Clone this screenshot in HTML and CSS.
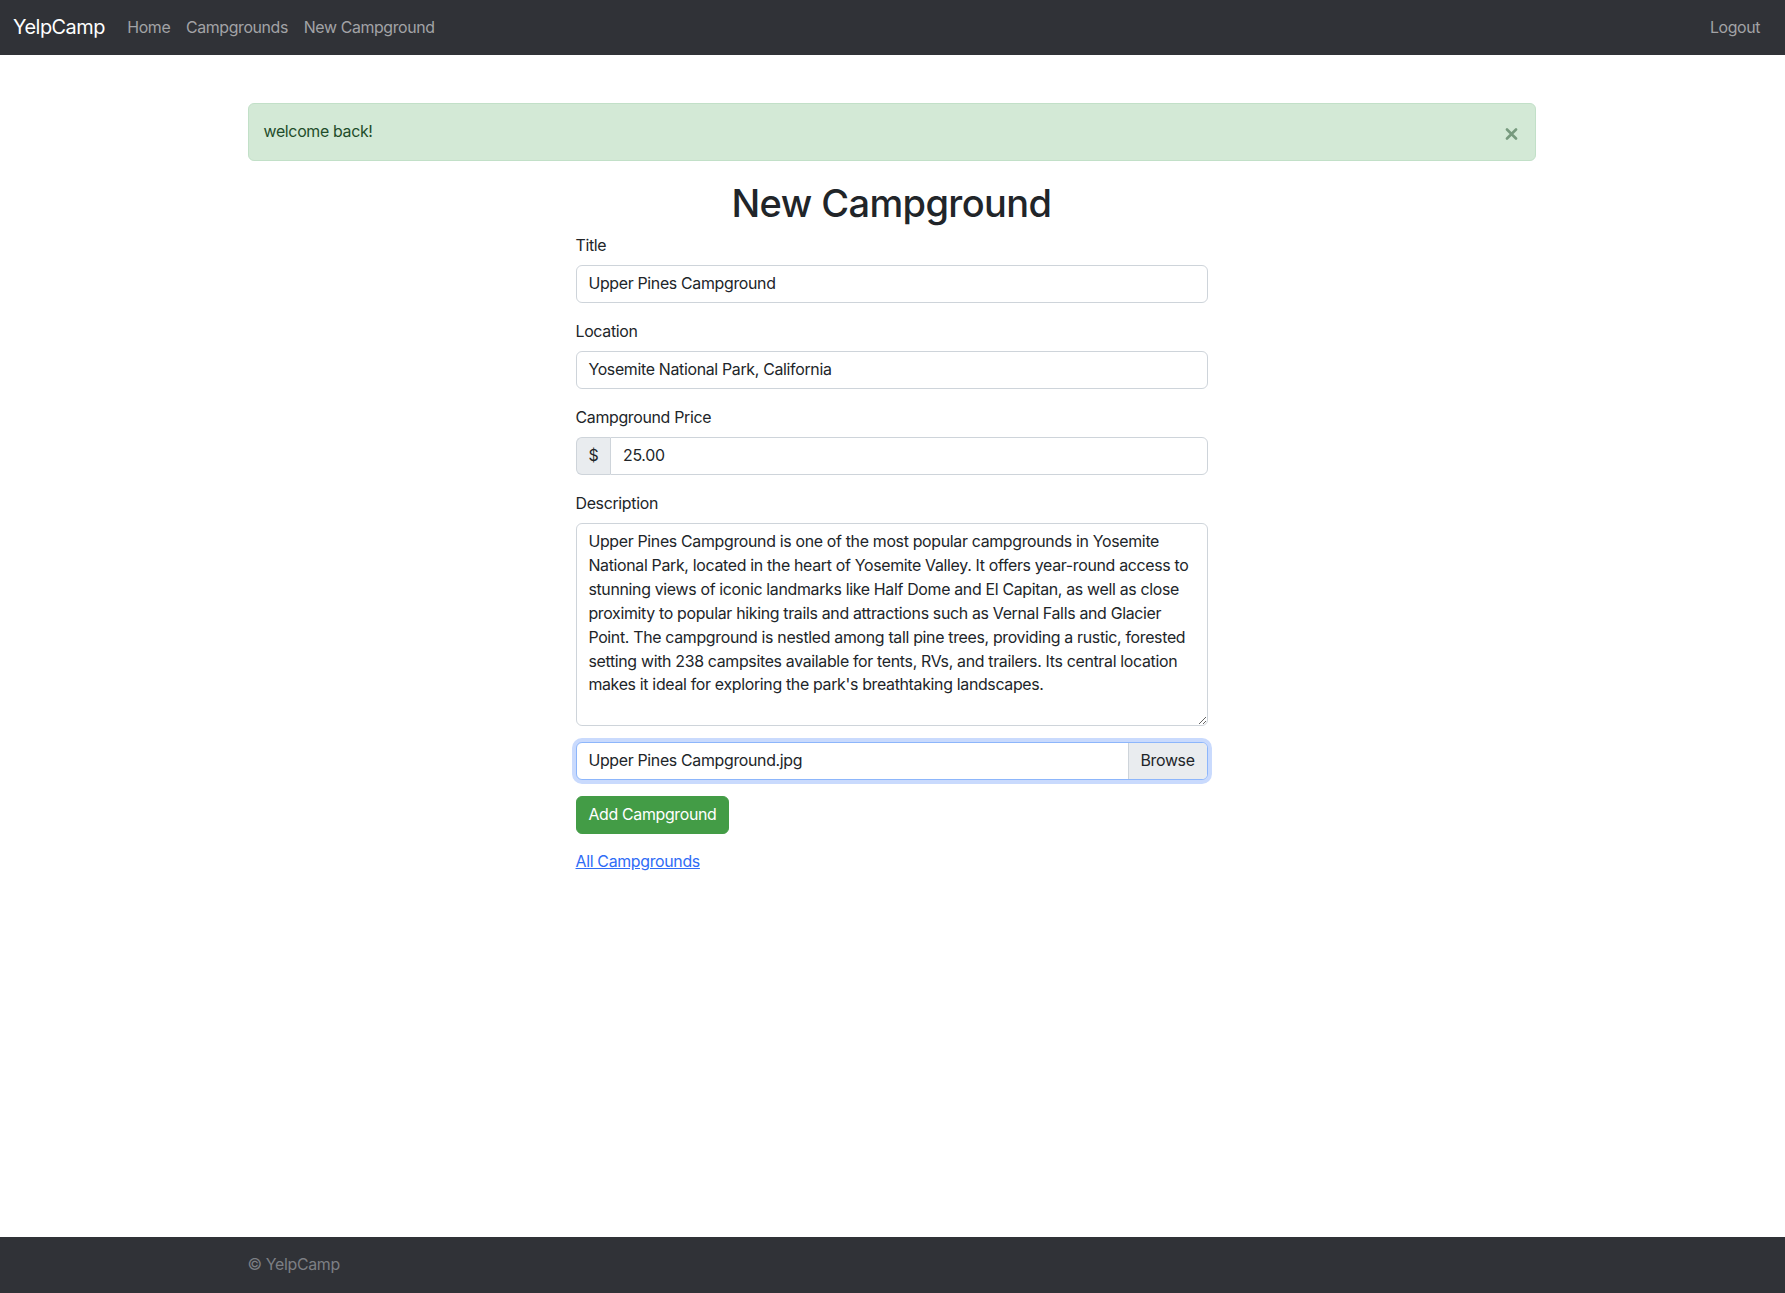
FILE: index.html
```html
<!DOCTYPE html>
<html lang="en">
<head>
<meta charset="utf-8">
<title>New Campground</title>
<link rel="stylesheet" href="styles.css">
</head>
<body>
<div class="page">
  <nav class="navbar">
    <a class="brand" href="#">YelpCamp</a>
    <div class="nav-links">
      <a class="nav-link" href="#">Home</a>
      <a class="nav-link" href="#">Campgrounds</a>
      <a class="nav-link" href="#">New Campground</a>
    </div>
    <div class="nav-right">
      <a class="nav-link" href="#">Logout</a>
    </div>
  </nav>

  <main class="container">
    <div class="alert">
      <span>welcome back!</span>
      <button class="close" type="button" aria-label="Close">
        <svg width="13" height="12" viewBox="0 0 13 12"><path d="M2 1.5 L11 10.5 M11 1.5 L2 10.5" stroke="currentColor" stroke-width="2.6" stroke-linecap="round"/></svg>
      </button>
    </div>

    <div class="form-col">
      <h1 class="title">New Campground</h1>
      <form class="form">
        <div class="group">
          <label class="label">Title</label>
          <input class="control" type="text" value="Upper Pines Campground">
        </div>
        <div class="group">
          <label class="label">Location</label>
          <input class="control" type="text" value="Yosemite National Park, California">
        </div>
        <div class="group">
          <label class="label">Campground Price</label>
          <div class="input-group">
            <span class="addon">$</span>
            <input class="control joined" type="text" value="25.00">
          </div>
        </div>
        <div class="group">
          <label class="label">Description</label>
          <textarea class="control area">Upper Pines Campground is one of the most popular campgrounds in Yosemite National Park, located in the heart of Yosemite Valley. It offers year-round access to stunning views of iconic landmarks like Half Dome and El Capitan, as well as close proximity to popular hiking trails and attractions such as Vernal Falls and Glacier Point. The campground is nestled among tall pine trees, providing a rustic, forested setting with 238 campsites available for tents, RVs, and trailers. Its central location makes it ideal for exploring the park's breathtaking landscapes.</textarea>
        </div>
        <div class="group file-group">
          <div class="file focused">
            <span class="file-name">Upper Pines Campground.jpg</span>
            <span class="file-btn">Browse</span>
          </div>
        </div>
        <div class="group">
          <button class="btn-success" type="button">Add Campground</button>
        </div>
        <a class="back-link" href="#">All Campgrounds</a>
      </form>
    </div>
  </main>

  <footer class="footer">
    <div class="footer-inner">
      <span class="muted">© YelpCamp</span>
    </div>
  </footer>
</div>
</body>
</html>
```

FILE: styles.css
```css
* { box-sizing: border-box; }

html, body {
  margin: 0;
  padding: 0;
}

body {
  font-family: Inter, "Noto Sans", "Liberation Sans", sans-serif;
  font-size: 15.9px;
  line-height: 23.85px;
  letter-spacing: -0.32px;
  color: #212529;
  background: #ffffff;
}

.page {
  min-height: 100vh;
  display: flex;
  flex-direction: column;
}

/* navbar */
.navbar {
  background: #303237;
  display: flex;
  align-items: center;
  height: 55px;
  padding: 0 17px 0 13px;
}

.brand {
  color: #ffffff;
  text-decoration: none;
  font-size: 19.9px;
  line-height: 29.8px;
  margin-right: 14.5px;
  letter-spacing: -0.5px;
}

.nav-links {
  display: flex;
}

.nav-right {
  margin-left: auto;
  display: flex;
}

.nav-link {
  color: #a2a3a6;
  text-decoration: none;
  padding: 7.9px 7.9px;
  line-height: 23.85px;
  letter-spacing: -0.38px;
}

/* main */
.container {
  width: 1288px;
  margin: 48.3px auto 0 calc(50% - 645px);
}

.alert {
  display: flex;
  align-items: center;
  justify-content: space-between;
  background: #d3e9d6;
  border: 1px solid #c2e0c8;
  color: #1f4d2b;
  border-radius: 5.96px;
  padding: 15.9px 15.9px 15.9px 15px;
  margin-bottom: 15.9px;
}

.close {
  border: 0;
  background: transparent;
  padding: 0;
  margin: 4px 1px 0 0;
  color: #779a7e;
  display: flex;
  cursor: pointer;
}

.form-col {
  width: 632px;
  margin: 0 auto;
}

.title {
  font-size: 38px;
  line-height: 52px;
  font-weight: 500;
  text-align: center;
  margin: 0 0 4.7px;
  color: #212529;
  letter-spacing: -0.6px;
}

.group {
  margin-bottom: 16.5px;
}

.file-group {
  margin-bottom: 16px;
}

.label {
  display: block;
  margin-bottom: 7.94px;
}

.control {
  display: block;
  width: 100%;
  padding: 5.96px 11.9px;
  font-family: inherit;
  font-size: 15.9px;
  line-height: 23.85px;
  letter-spacing: inherit;
  color: #212529;
  background: #ffffff;
  border: 1px solid #ced4da;
  border-radius: 5.96px;
  outline: none;
}

.area {
  height: 202.2px;
  resize: vertical;
}

.input-group {
  display: flex;
}

.addon {
  padding: 5.96px 11.9px;
  background: #e9ecef;
  border: 1px solid #ced4da;
  border-right: 0;
  border-radius: 5.96px 0 0 5.96px;
  color: #212529;
}

.joined {
  flex: 1;
  border-radius: 0 5.96px 5.96px 0;
}

.file {
  display: flex;
  border: 1px solid #ced4da;
  border-radius: 5.96px;
  overflow: hidden;
  background: #ffffff;
}

.file.focused {
  border-color: #8db6fb;
  box-shadow: 0 0 0 3.97px #c9dafd;
}

.file-name {
  flex: 1;
  padding: 5.96px 11.9px;
}

.file-btn {
  padding: 5.96px 11.9px;
  background: #e9ecef;
  border-left: 1px solid #ced4da;
}

.btn-success {
  font-family: inherit;
  font-size: 15.9px;
  line-height: 23.85px;
  letter-spacing: inherit;
  color: #ffffff;
  background: #439c46;
  border: 1px solid #439c46;
  border-radius: 5.96px;
  padding: 5.96px 11.9px;
  cursor: pointer;
}

.back-link {
  color: #2f6cf6;
  text-decoration: underline;
}

/* footer */
.footer {
  margin-top: auto;
  background: #303237;
  padding: 15.9px 0;
}

.footer-inner {
  width: 1288px;
  margin: 0 auto 0 calc(50% - 645px);
}

.muted {
  color: #7c7f84;
}
```
